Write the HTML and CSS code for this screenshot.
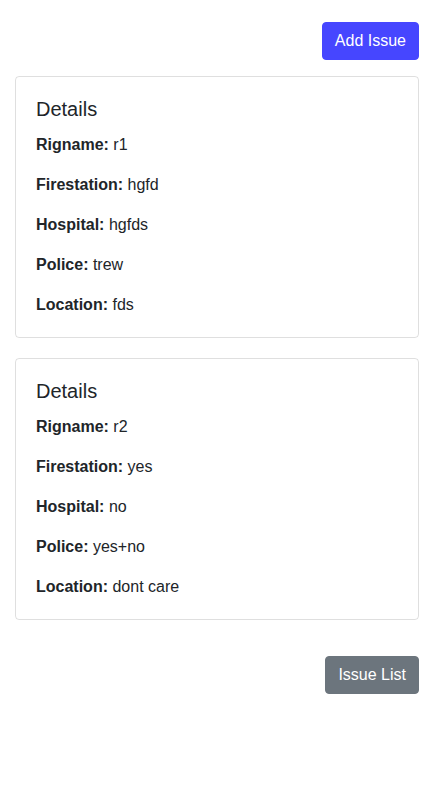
FILE: index.html
```html
<!DOCTYPE html>
<html>
<head>
<meta charset="utf-8">
<link rel="stylesheet" href="styles.css">
</head>
<body>
<div class="container">
  <div class="top-bar">
    <button class="btn btn-primary">Add Issue</button>
  </div>
  <div class="card">
    <h5 class="card-title">Details</h5>
    <p class="card-text"><b>Rigname:</b> r1</p>
    <p class="card-text"><b>Firestation:</b> hgfd</p>
    <p class="card-text"><b>Hospital:</b> hgfds</p>
    <p class="card-text"><b>Police:</b> trew</p>
    <p class="card-text"><b>Location:</b> fds</p>
  </div>
  <div class="card">
    <h5 class="card-title">Details</h5>
    <p class="card-text"><b>Rigname:</b> r2</p>
    <p class="card-text"><b>Firestation:</b> yes</p>
    <p class="card-text"><b>Hospital:</b> no</p>
    <p class="card-text"><b>Police:</b> yes+no</p>
    <p class="card-text"><b>Location:</b> dont care</p>
  </div>
  <div class="bottom-bar">
    <button class="btn btn-secondary">Issue List</button>
  </div>
</div>
</body>
</html>
```

FILE: styles.css
```css
* { box-sizing: border-box; }
body {
  margin: 0;
  font-family: "Liberation Sans", Arial, sans-serif;
  font-size: 16px;
  line-height: 1.5;
  color: #212529;
  background: #fff;
}
.container {
  padding: 22px 15px 0;
}
.top-bar, .bottom-bar {
  display: flex;
  justify-content: flex-end;
}
.top-bar { margin-bottom: 16px; }
.bottom-bar { margin-top: 36px; }
.btn {
  font-family: inherit;
  font-size: 16px;
  line-height: 1.5;
  padding: 6px 12px;
  border: 1px solid transparent;
  border-radius: 4px;
  color: #fff;
  cursor: pointer;
}
.btn-primary { background: #4646ff; border-color: #4646ff; }
.btn-secondary { background: #6c757d; border-color: #6c757d; }
.card {
  border: 1px solid rgba(0,0,0,.125);
  border-radius: 4px;
  padding: 20px;
  margin-bottom: 20px;
}
.card-title {
  margin: 0 0 12px;
  font-size: 20px;
  font-weight: 500;
  line-height: 1.2;
}
.card-text { margin: 0 0 16px; }
.card-text:last-child { margin-bottom: 0; }
.card-text b { font-weight: 700; }
```
